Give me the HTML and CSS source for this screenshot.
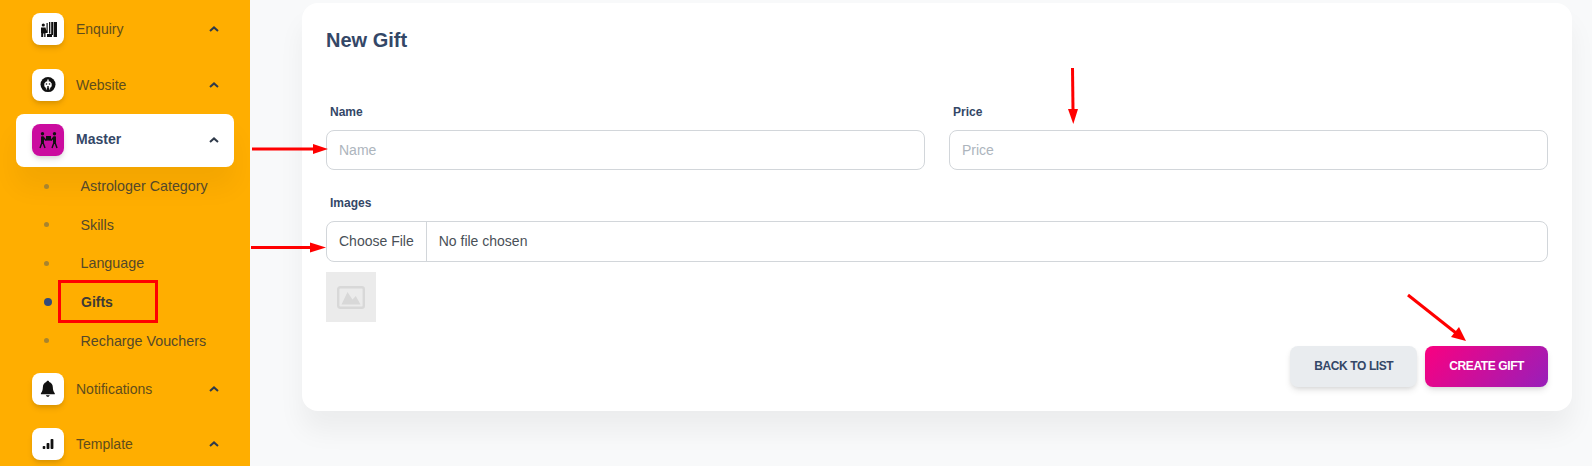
FILE: index.html
```html
<!DOCTYPE html>
<html lang="en">
<head>
  <meta charset="UTF-8">
  <meta name="viewport" content="width=device-width, initial-scale=1.0">
  <title>New Gift</title>
  <link rel="stylesheet" href="styles.css">
</head>
<body>

  <!-- Sidebar -->
  <aside class="sidebar">
    <div class="nav-item nav-first">
      <span class="nav-icon">
        <svg viewBox="0 0 32 32" width="32" height="32">
          <circle cx="11.3" cy="12" r="1.6" fill="#111"/>
          <path d="M9 14.5h4.5l1 3.5v-8h1.2v10h-2.2v4h-1.3v-3.5h-1v3.5H9.2v-4H9z" fill="#111"/>
          <rect x="17" y="9" width="1.3" height="11.5" fill="#111"/>
          <rect x="19.2" y="9" width="1.8" height="13" fill="#111"/>
          <rect x="21.6" y="9" width="3.4" height="15" fill="#111"/>
          <rect x="15" y="21" width="5" height="3" fill="#111"/>
        </svg>
      </span>
      <span class="nav-text">Enquiry</span>
      <svg class="caret" viewBox="0 0 10 6" width="10" height="6"><path d="M1 5l4-3.6L9 5" fill="none" stroke="#2f3a4a" stroke-width="2"/></svg>
    </div>
    <div class="nav-item nav-second">
      <span class="nav-icon">
        <svg viewBox="0 0 32 32" width="32" height="32">
          <circle cx="16" cy="15.6" r="7.5" fill="#111"/>
          <path d="M14 12.6h1.3v-2h1.4v2H18l1.700 1.800v2.600l-.9 1.800-.7-.6v2.400h-.9v-1.800h-2.400v1.800h-.9v-2.400l-.7.6-.9-1.800v-2.600z" fill="#fff"/>
          <circle cx="14.5" cy="15" r=".8" fill="#111"/>
          <circle cx="17.5" cy="15" r=".8" fill="#111"/>
          <rect x="15.3" y="17" width="1.4" height="2.5" fill="#111"/>
        </svg>
      </span>
      <span class="nav-text">Website</span>
      <svg class="caret" viewBox="0 0 10 6" width="10" height="6"><path d="M1 5l4-3.6L9 5" fill="none" stroke="#2f3a4a" stroke-width="2"/></svg>
    </div>
    <div class="nav-item nav-open">
      <span class="nav-icon icon-active">
        <svg viewBox="0 0 32 32" width="32" height="32">
          <circle cx="10.5" cy="9.8" r="1.7" fill="#111"/>
          <circle cx="22.5" cy="9.8" r="1.7" fill="#111"/>
          <rect x="14" y="12" width="5" height="4.6" fill="#111"/>
          <rect x="9" y="12.200" width="3" height="6.800" rx=".8" fill="#111"/>
          <rect x="21" y="12.200" width="3" height="6.800" rx=".8" fill="#111"/>
          <path d="M11.500 13.500L14 16.500M21.500 13.500L19 16.500M10 18.500L8 24M11 18.500L13 24M23 18.500L25 24M22 18.500L20 24" stroke="#111" stroke-width="1.400" fill="none"/>
        </svg>
      </span>
      <span class="nav-text">Master</span>
      <svg class="caret" viewBox="0 0 10 6" width="10" height="6"><path d="M1 5l4-3.6L9 5" fill="none" stroke="#2f3a4a" stroke-width="2"/></svg>
    </div>
    <ul class="sub-nav">
      <li class="sub-item"><span class="dot"></span>Astrologer Category</li>
      <li class="sub-item"><span class="dot"></span>Skills</li>
      <li class="sub-item"><span class="dot"></span>Language</li>
      <li class="sub-item sub-active"><span class="dot"></span>Gifts</li>
      <li class="sub-item"><span class="dot"></span>Recharge Vouchers</li>
    </ul>
    <div class="nav-item">
      <span class="nav-icon">
        <svg viewBox="0 0 32 32" width="32" height="32">
          <path d="M15.8 7.800c.8 0 1.300.5 1.400 1.200 2.400.7 3.500 2.700 3.600 5 .1 2.800.6 4.600 2 6.200v1H8.900v-1c1.400-1.600 1.900-3.400 2-6.200.1-2.300 1.200-4.300 3.500-5 .1-.7.6-1.200 1.400-1.200z" fill="#111"/>
          <path d="M13.800 22.300h4l-1.200 1.400h-1.600z" fill="#111"/>
        </svg>
      </span>
      <span class="nav-text">Notifications</span>
      <svg class="caret" viewBox="0 0 10 6" width="10" height="6"><path d="M1 5l4-3.6L9 5" fill="none" stroke="#2f3a4a" stroke-width="2"/></svg>
    </div>
    <div class="nav-item">
      <span class="nav-icon">
        <svg viewBox="0 0 32 32" width="32" height="32">
          <rect x="10.7" y="18" width="2.6" height="3" rx=".8" fill="#111"/>
          <rect x="14.6" y="15" width="2.8" height="6" rx=".8" fill="#111"/>
          <rect x="18.6" y="11" width="2.8" height="10" rx=".8" fill="#111"/>
        </svg>
      </span>
      <span class="nav-text">Template</span>
      <svg class="caret" viewBox="0 0 10 6" width="10" height="6"><path d="M1 5l4-3.6L9 5" fill="none" stroke="#2f3a4a" stroke-width="2"/></svg>
    </div>
  </aside>

  <!-- Formulario -->
  <main class="main">
    <section class="card">
      <h1 class="card-title">New Gift</h1>
      <div class="form-row">
        <div class="field">
          <label class="field-label">Name</label>
          <input class="form-control" type="text" placeholder="Name">
        </div>
        <div class="field">
          <label class="field-label">Price</label>
          <input class="form-control" type="text" placeholder="Price">
        </div>
      </div>
      <label class="field-label">Images</label>
      <div class="file-control">
        <span class="file-btn">Choose File</span>
        <span class="file-name">No file chosen</span>
      </div>
      <div class="thumb">
        <svg viewBox="0 0 28 23" width="28" height="23">
          <rect x="1.2" y="1.2" width="25.6" height="20.600" rx="2" fill="none" stroke="#d8d8d8" stroke-width="2.400"/>
          <path d="M4.500 18.500L10.500 6L15.500 13.500L18.800 10L23.500 18.500z" fill="#d8d8d8"/>
        </svg>
      </div>
      <div class="actions">
        <button class="btn btn-light">Back to list</button>
        <button class="btn btn-primary">Create Gift</button>
      </div>
    </section>
  </main>

  <!-- Red notes drawn over the page -->
  <svg class="notes" viewBox="0 0 1592 466" width="1592" height="466">
    <rect x="59.5" y="281.5" width="97" height="40" fill="none" stroke="#ff0000" stroke-width="3"/>
    <path d="M252 149H314" stroke="#ff0000" stroke-width="3"/>
    <path d="M313 144L328 149L313 154z" fill="#ff0000"/>
    <path d="M251 247.5H311" stroke="#ff0000" stroke-width="3"/>
    <path d="M310 242.5L326 247.5L310 252.5z" fill="#ff0000"/>
    <path d="M1072.5 68L1073 110" stroke="#ff0000" stroke-width="3"/>
    <path d="M1068 109H1078L1073.3 124z" fill="#ff0000"/>
    <path d="M1408 295L1456 333" stroke="#ff0000" stroke-width="3"/>
    <path d="M1459 327L1451 337L1466 341z" fill="#ff0000"/>
  </svg>

</body>
</html>
```

FILE: styles.css
```css
html, body {
  height: 100%;
}

body {
  font-family: "Liberation Sans", Arial, sans-serif;
  margin: 0;
  display: flex;
  height: 466px;
  overflow: hidden;
  background-color: #f8f9fa;
  position: relative;
  color: #344767;
}

/* Sidebar */
.sidebar {
  width: 250px;
  flex-shrink: 0;
  box-sizing: border-box;
  padding: 2px 16px 0;
  background-color: #ffae00;
  overflow: hidden;
}

.nav-item {
  display: flex;
  align-items: center;
  height: 54px;
  margin-bottom: 1px;
  padding: 0 16px;
  font-size: 14px;
  border-radius: 8px;
}

.nav-first,
.nav-second {
  margin-bottom: 2px;
}

.nav-open {
  height: 53px;
  margin-bottom: 0;
  padding-bottom: 1px;
  box-sizing: border-box;
  background-color: #fff;
  font-weight: bold;
  box-shadow: 0 20px 27px 0 rgba(0, 0, 0, 0.05);
}

.nav-icon {
  width: 32px;
  height: 32px;
  margin-right: 12px;
  border-radius: 8px;
  background-color: #fff;
  box-shadow: 0 4px 6px -1px rgba(0, 0, 0, 0.12), 0 2px 4px -1px rgba(0, 0, 0, 0.07);
}

.nav-icon svg {
  display: block;
}

.icon-active {
  background-color: #cb0c9f;
}

.nav-text {
  flex: 1;
  color: #5f4d1c;
}

.nav-open .nav-text {
  margin-bottom: 2px;
  color: #344767;
}

.caret {
  margin-right: -1px;
}

.sub-nav {
  list-style: none;
  margin: 0 0 1px;
  padding: 0;
  height: 194px;
}

.sub-item {
  display: flex;
  align-items: center;
  height: 38.6px;
  padding-left: 28px;
  font-size: 14.3px;
  color: #54482a;
}

.dot {
  width: 5px;
  height: 5px;
  margin-right: 31.5px;
  border-radius: 50%;
  background-color: #a8842f;
}

.sub-active {
  font-size: 14px;
  font-weight: bold;
  color: #3d3a36;
}

.sub-active .dot {
  width: 8px;
  height: 8px;
  margin-right: 29px;
  background-color: #344a7a;
}

/* Contenido */
.main {
  flex: 1;
  padding: 3px 20px 0 52px;
}

.card {
  box-sizing: border-box;
  height: 408px;
  padding: 24px;
  background-color: #fff;
  border-radius: 16px;
  box-shadow: 0 20px 27px 0 rgba(0, 0, 0, 0.05);
}

.card-title {
  margin: 0 0 51px;
  padding-top: 1px;
  font-size: 20px;
  line-height: 24px;
  font-weight: bold;
  color: #344767;
}

.form-row {
  display: grid;
  grid-template-columns: 1fr 1fr;
  gap: 24px;
  margin-bottom: 24px;
}

.field-label {
  display: block;
  margin: 0 0 9px 4px;
  font-size: 12px;
  line-height: 18px;
  font-weight: bold;
  color: #344767;
}

.form-control {
  display: block;
  box-sizing: border-box;
  width: 100%;
  height: 40px;
  padding: 0 12px;
  font-family: inherit;
  font-size: 14px;
  border: 1px solid #d2d6da;
  border-radius: 8px;
  background-color: #fff;
  outline: none;
}

.form-control::placeholder {
  color: #adb5bd;
}

.file-control {
  display: flex;
  align-items: center;
  box-sizing: border-box;
  height: 41px;
  font-size: 14px;
  color: #495057;
  border: 1px solid #d2d6da;
  border-radius: 8px;
}

.file-btn {
  display: flex;
  align-items: center;
  box-sizing: border-box;
  height: 100%;
  padding: 0 12px 2px;
  border-right: 1px solid #d2d6da;
}

.file-name {
  padding: 0 0 2px 12px;
}

.thumb {
  display: flex;
  align-items: center;
  justify-content: center;
  width: 50px;
  height: 50px;
  margin-top: 10px;
  background-color: #ebebeb;
}

.actions {
  display: flex;
  justify-content: flex-end;
  gap: 8px;
  margin-top: 24px;
}

.btn {
  height: 41px;
  padding: 0 24px 2px;
  font-family: inherit;
  font-size: 12px;
  font-weight: bold;
  letter-spacing: -0.4px;
  text-transform: uppercase;
  border: none;
  border-radius: 8px;
  cursor: pointer;
  box-shadow: 0 4px 7px -1px rgba(0, 0, 0, 0.11), 0 2px 4px -1px rgba(0, 0, 0, 0.07);
}

.btn-light {
  background-color: #e9ecef;
  color: #344767;
}

.btn-primary {
  background-image: linear-gradient(310deg, #981fba, #fa0080);
  color: #fff;
}

.notes {
  position: absolute;
  top: 0;
  left: 0;
  pointer-events: none;
}
```
